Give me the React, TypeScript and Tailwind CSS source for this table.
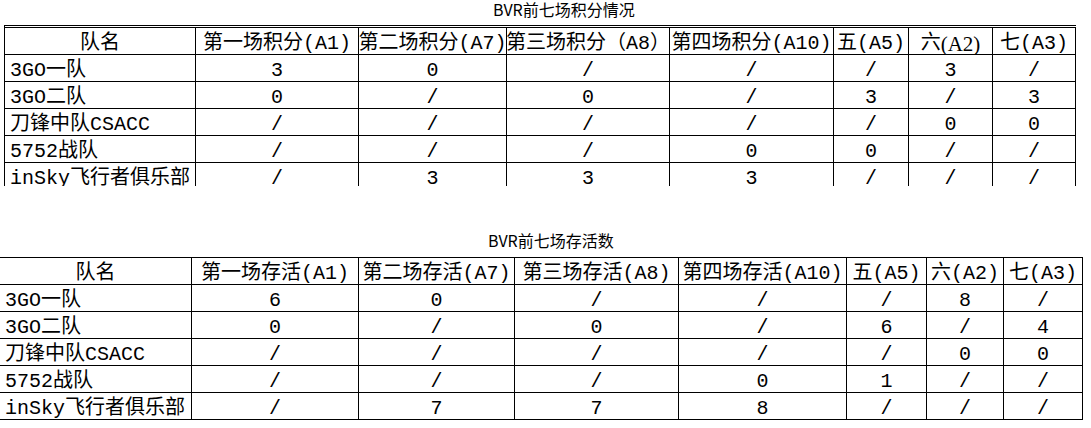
import React from 'react';

const cellFont = { fontFamily: '"Liberation Mono", "Noto Sans CJK SC", monospace' };

const scoreHeaders = ['队名', '第一场积分(A1)', '第二场积分(A7)', '第三场积分（A8）', '第四场积分(A10)', '五(A5)', '六(A2)', '七(A3)'];
const surviveHeaders = ['队名', '第一场存活(A1)', '第二场存活(A7)', '第三场存活(A8)', '第四场存活(A10)', '五(A5)', '六(A2)', '七(A3)'];

const scoreRows = [
  ['3GO一队', '3', '0', '/', '/', '/', '3', '/'],
  ['3GO二队', '0', '/', '0', '/', '3', '/', '3'],
  ['刀锋中队CSACC', '/', '/', '/', '/', '/', '0', '0'],
  ['5752战队', '/', '/', '/', '0', '0', '/', '/'],
  ['inSky飞行者俱乐部', '/', '3', '3', '3', '/', '/', '/'],
];

const surviveRows = [
  ['3GO一队', '6', '0', '/', '/', '/', '8', '/'],
  ['3GO二队', '0', '/', '0', '/', '6', '/', '4'],
  ['刀锋中队CSACC', '/', '/', '/', '/', '/', '0', '0'],
  ['5752战队', '/', '/', '/', '0', '1', '/', '/'],
  ['inSky飞行者俱乐部', '/', '7', '7', '8', '/', '/', '/'],
];

function Cell({ children, left }: { children: React.ReactNode; left?: boolean }) {
  return (
    <div
      className={`h-[27px] border-r border-b border-black flex items-end overflow-hidden whitespace-nowrap text-[20px] leading-[20px] text-black ${
        left ? 'justify-start pl-[5px]' : 'justify-center'
      }`}
      style={cellFont}
    >
      {children}
    </div>
  );
}

function Sheet({ headers, rows, cols, first }: { headers: string[]; rows: string[][]; cols: string; first?: boolean }) {
  return (
    <div className={`grid ${cols} border-black ${first ? 'border-l border-t-[3px] border-double' : 'border-t'}`}>
      {headers.map((h, i) => (
        <Cell key={'h' + i}>
          {/* 六(A2) on the score sheet is typed with a different latin face */}
          {first && h === '六(A2)' ? (
            <>
              六<span className="font-['Liberation_Serif'] text-[21px]">(A2)</span>
            </>
          ) : (
            h
          )}
        </Cell>
      ))}
      {rows.map((r, ri) =>
        r.map((v, ci) => (
          <Cell key={ri + '-' + ci} left={ci === 0}>
            {v}
          </Cell>
        ))
      )}
    </div>
  );
}

export default function App() {
  return (
    <div className="w-[1091px] h-[428px] bg-white overflow-hidden">
      <div className="h-[25px] pl-[493px] font-['Noto_Sans_CJK_SC'] text-[16px] leading-[18px] text-black">
        BVR前七场积分情况
      </div>
      {/* the last row is cut off by the window edge in the original */}
      <div className="h-[161px] overflow-hidden pl-[4px]">
        <Sheet
          first
          headers={scoreHeaders}
          rows={scoreRows}
          cols="grid-cols-[191px_163px_148px_163px_164px_75px_84px_83px] w-[1072px]"
        />
      </div>
      <div className="h-[71px] pl-[488px] pt-[45px] font-['Noto_Sans_CJK_SC'] text-[16px] leading-[18px] text-black">
        BVR前七场存活数
      </div>
      <Sheet
        headers={surviveHeaders}
        rows={surviveRows}
        cols="grid-cols-[192px_167px_156px_164px_168px_80px_77px_79px] w-[1083px]"
      />
    </div>
  );
}
